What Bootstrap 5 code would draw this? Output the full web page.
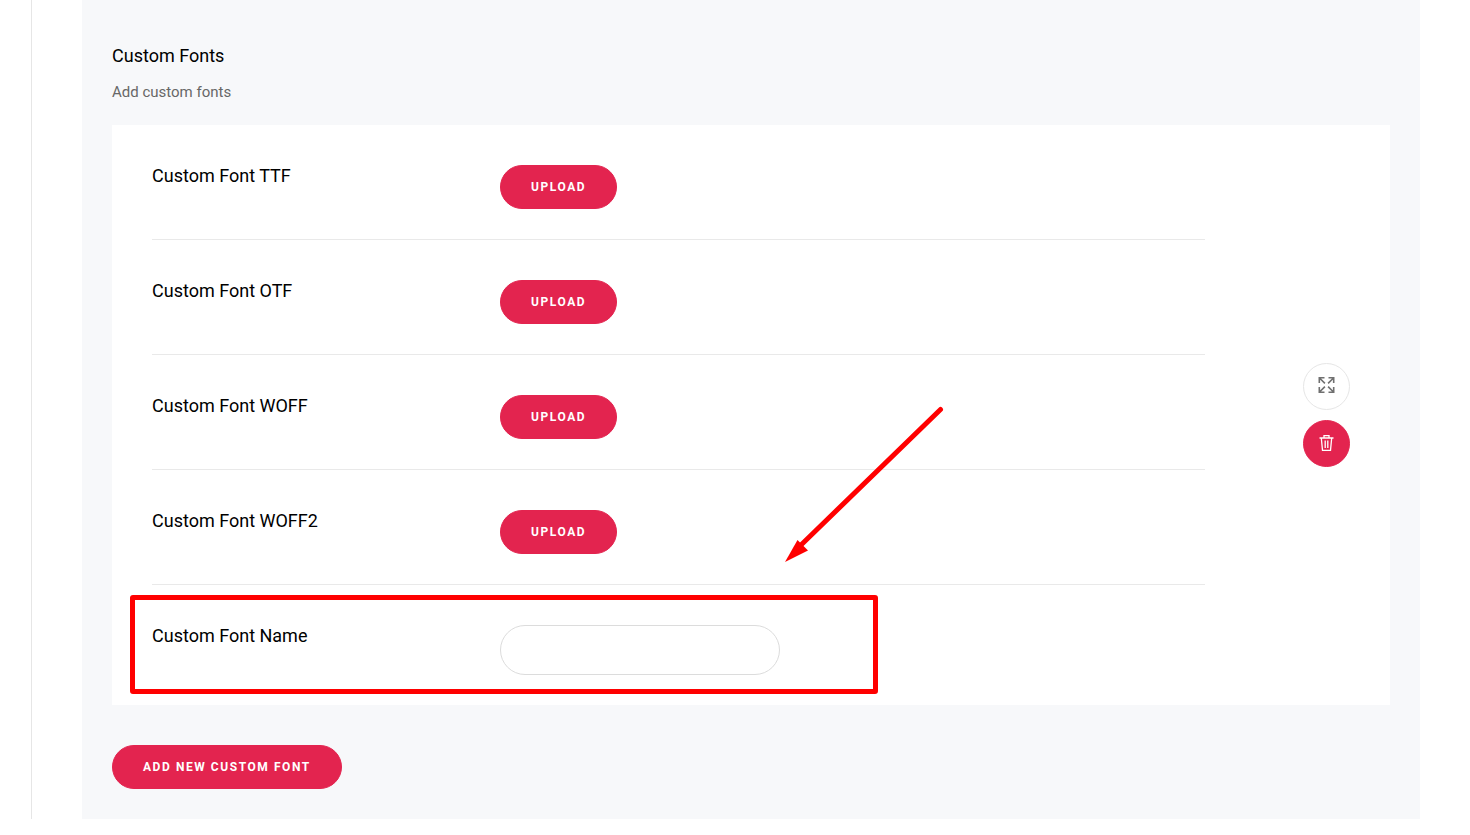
<!DOCTYPE html>
<html lang="en">
<head>
<meta charset="utf-8">
<meta name="viewport" content="width=device-width, initial-scale=1">
<title>Custom Fonts</title>
<link href="https://cdn.jsdelivr.net/npm/bootstrap@5.3.0/dist/css/bootstrap.min.css" rel="stylesheet">
<style>
  body { font-family: Roboto, sans-serif; color: #000; background: #fff; }
  .settings-shell { margin-left: 31px; margin-bottom: 16px; padding: 0 50px; border-left: 1px solid #e6e6e6; }
  .settings-panel { background: #f7f8fa; padding: 40px 30px 30px; }
  .panel-title, .field-label { font-size: 18px; line-height: 22px; font-weight: 400; color: #000; }
  .panel-title { line-height: 32px; }
  .panel-hint { font-size: 15px; line-height: 24px; color: #676767; }
  .font-card { padding: 0 40px; margin-top: 21px; margin-bottom: 40px; }
  .field-row { padding: 40px 0 30px; }
  .field-row + .field-row { border-top: 1px solid #e9e9e9; }
  .label-col { flex: 0 0 348px; }
  .btn-pill { --bs-btn-color: #fff; --bs-btn-bg: #e3244f; --bs-btn-border-color: #e3244f;
    --bs-btn-hover-color: #fff; --bs-btn-hover-bg: #c81c43; --bs-btn-hover-border-color: #c81c43;
    --bs-btn-active-color: #fff; --bs-btn-active-bg: #b5183b; --bs-btn-active-border-color: #b5183b;
    --bs-btn-border-radius: 22px; --bs-btn-padding-x: 30px; --bs-btn-padding-y: 11px;
    --bs-btn-font-size: 12px; --bs-btn-line-height: 20px; --bs-btn-font-weight: 700;
    letter-spacing: .13em; }
  .name-input { width: 280px; height: 50px; border: 1px solid #dcdcdc; padding: 0 24px; }
  .card-tools { margin-left: 98px; gap: 10px; }
  .btn-round { --bs-btn-padding-x: 0; --bs-btn-padding-y: 0; width: 47px; height: 47px; border-radius: 50%; }
  .btn-move { --bs-btn-border-color: #e6e6e6; --bs-btn-color: #707070; --bs-btn-bg: #fff; }
  .mark-box { left: -22px; top: 10px; width: 748px; height: 99px; border: 5px solid #f00; border-radius: 3px; pointer-events: none; }
  .mark-arrow { left: 630px; top: -181px; pointer-events: none; }
</style>
</head>
<body>
<main class="settings-shell">
  <section class="settings-panel">
    <h1 class="panel-title mb-2">Custom Fonts</h1>
    <p class="panel-hint mb-0">Add custom fonts</p>

    <div class="font-card bg-white d-flex align-items-center">
      <form class="flex-grow-1">
        <div class="field-row d-flex align-items-start">
          <label class="field-label label-col" for="ttf">Custom Font TTF</label>
          <button id="ttf" type="button" class="btn btn-pill text-uppercase">Upload</button>
        </div>
        <div class="field-row d-flex align-items-start">
          <label class="field-label label-col" for="otf">Custom Font OTF</label>
          <button id="otf" type="button" class="btn btn-pill text-uppercase">Upload</button>
        </div>
        <div class="field-row d-flex align-items-start">
          <label class="field-label label-col" for="woff">Custom Font WOFF</label>
          <button id="woff" type="button" class="btn btn-pill text-uppercase">Upload</button>
        </div>
        <div class="field-row d-flex align-items-start">
          <label class="field-label label-col" for="woff2">Custom Font WOFF2</label>
          <button id="woff2" type="button" class="btn btn-pill text-uppercase">Upload</button>
        </div>
        <div class="field-row d-flex align-items-start position-relative">
          <label class="field-label label-col" for="fontname">Custom Font Name</label>
          <input id="fontname" type="text" class="name-input rounded-pill bg-white">
          <div class="mark-box position-absolute"></div>
          <svg class="mark-arrow position-absolute" width="164" height="162" viewBox="0 0 164 162" aria-hidden="true">
            <path d="M158.500 5.500 19 141" stroke="#f00" stroke-width="5" stroke-linecap="round" fill="none"/>
            <path d="M3 158 15.500 136 26 146.500z" fill="#f00"/>
          </svg>
        </div>
      </form>
      <div class="card-tools d-flex flex-column">
        <button type="button" class="btn btn-round btn-move d-flex align-items-center justify-content-center" aria-label="Move">
          <svg width="19" height="21" viewBox="0 0 19 21" fill="none" stroke="currentColor" stroke-width="1.600">
            <path d="M2.300 7V1.800H7.500M11.500 1.800h5.200V7M16.700 11v5.200H11.500M7.500 16.200H2.300V11M2.500 2l5.400 5.400M16.500 2l-5.400 5.400M16.500 16l-5.400-5.400M2.500 16l5.400-5.400"/>
          </svg>
        </button>
        <button type="button" class="btn btn-pill btn-round d-flex align-items-center justify-content-center" aria-label="Delete">
          <svg width="17" height="19" viewBox="0 0 17 19" fill="none" stroke="currentColor" stroke-width="1.300">
            <path d="M1.500 4h14M6 3.500V1.600h5v1.900M3.300 4l1.200 12.300h8L13.700 4M7.200 6.500v7.500M9.800 6.500v7.500"/>
          </svg>
        </button>
      </div>
    </div>

    <button type="button" class="btn btn-pill text-uppercase">Add new custom font</button>
  </section>
</main>
<script src="https://cdn.jsdelivr.net/npm/bootstrap@5.3.0/dist/js/bootstrap.bundle.min.js"></script>
</body>
</html>
